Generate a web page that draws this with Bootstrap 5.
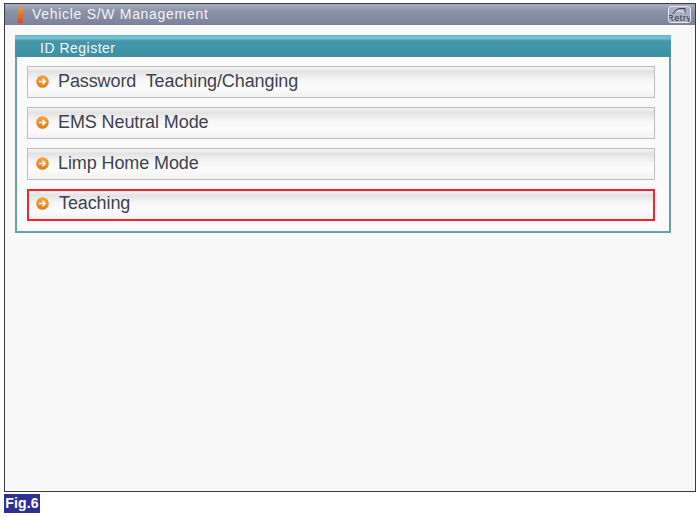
<!DOCTYPE html>
<html lang="en">
<head>
  <meta charset="UTF-8" />
  <meta name="viewport" content="width=device-width, initial-scale=1.0" />
  <title>Vehicle S/W Management</title>
  <link href="https://cdn.jsdelivr.net/npm/bootstrap@5.3.3/dist/css/bootstrap.min.css" rel="stylesheet">
  <style>
    body {
      background-color: #fff;
      font-family: "Liberation Sans", Arial, sans-serif;
      padding: 3px 0 0 4px;
    }

    .scan-frame {
      width: 692px;
      height: 489px;
      background-color: #f8f8f8;
      border: 1px solid #3a3a3e;
    }

    .title-strip {
      height: 21px;
      padding: 0 4px 0 12px;
      background: linear-gradient(#a9afc0, #8b92a8 35%, #7b829b);
      color: #f4f5f8;
      font-size: 14px;
      letter-spacing: .7px;
    }

    .retry-btn {
      width: 23px;
      height: 17px;
      border: 1px solid #e4e6ec;
      border-radius: 3px;
      background-color: #aab0c0;
    }

    .register-panel {
      width: 656px;
      height: 198px;
      margin: 10px 0 0 10px;
      border: 2px solid #6b9ea8;
      border-top: 0;
      background-color: #fafafa;
    }

    .panel-head {
      height: 22px;
      margin: 0 -2px;
      padding: 4px 0 0 25px;
      background: linear-gradient(#5fb4c8, #7cc4d2 3px, #4497a9 6px, #3f8fa2);
      color: #f3f9fa;
      font-size: 14px;
      letter-spacing: .5px;
    }

    .menu-stack {
      padding: 9px 14px 0 10px;
      gap: 9px;
    }

    .menu-row {
      height: 32px;
      padding: 0 0 1px 8px;
      border: 1px solid #bdbdbd;
      background: linear-gradient(#f6f6f6, #e2e2e2 15%, #f7f7f7 45%, #fbfbfb 70%, #f2f2f2);
      color: #3f414e;
      font-size: 18px;
      letter-spacing: -.1px;
    }

    .menu-row.picked {
      border: 2px solid #f3242c;
      padding: 0 0 3px 7px;
    }

    .menu-row svg {
      margin-right: 9px;
    }

    .menu-row.picked svg {
      margin-right: 10px;
    }

    .fig-tag {
      width: 36px;
      height: 19px;
      margin-top: 2px;
      background-color: #2e2f93;
      color: #fff;
      font-size: 14px;
      font-weight: 700;
      letter-spacing: .2px;
    }
  </style>
</head>
<body>
  <div class="scan-frame">
    <div class="title-strip d-flex align-items-center">
      <svg width="7" height="16" viewBox="0 0 7 16" class="me-2 flex-shrink-0">
        <defs>
          <linearGradient id="torch" x1="0" y1="0" x2="0" y2="1">
            <stop offset="0" stop-color="#d9a04a" />
            <stop offset="1" stop-color="#e2452a" />
          </linearGradient>
          <linearGradient id="dot-fill" x1="0" y1="0" x2="0" y2="1">
            <stop offset="0" stop-color="#f3a53a" />
            <stop offset="1" stop-color="#e27a1c" />
          </linearGradient>
        </defs>
        <path d="M0 0h1.500v2h1V0h2v2h1V0H7v9l-1 1v6H1v-6L0 9z" fill="url(#torch)" />
      </svg>
      <span>Vehicle S/W Management</span>
      <div class="retry-btn ms-auto d-flex align-items-end justify-content-center">
        <svg width="21" height="15" viewBox="0 0 21 15">
          <path d="M4 7C5 4 8 1.500 12 1.500h4v5" fill="none" stroke="#3c4050" stroke-width="1" />
          <path d="M8 4h5M13 4l3 2" fill="none" stroke="#f2f3f6" stroke-width="1" />
          <text x="10.500" y="14" text-anchor="middle" font-size="8.500" font-family="Liberation Sans, sans-serif" fill="#2f3340">Retry</text>
        </svg>
      </div>
    </div>

    <div class="register-panel">
      <div class="panel-head d-flex align-items-center">ID Register</div>
      <div class="menu-stack d-flex flex-column">
        <div class="menu-row d-flex align-items-center">
          <svg width="13" height="13" viewBox="0 0 13 13"><use href="#arrow-dot" /></svg>
          <span>Password&nbsp; Teaching/Changing</span>
        </div>
        <div class="menu-row d-flex align-items-center">
          <svg width="13" height="13" viewBox="0 0 13 13"><use href="#arrow-dot" /></svg>
          <span>EMS Neutral Mode</span>
        </div>
        <div class="menu-row d-flex align-items-center">
          <svg width="13" height="13" viewBox="0 0 13 13"><use href="#arrow-dot" /></svg>
          <span>Limp Home Mode</span>
        </div>
        <div class="menu-row picked d-flex align-items-center">
          <svg width="13" height="13" viewBox="0 0 13 13"><use href="#arrow-dot" /></svg>
          <span>Teaching</span>
        </div>
      </div>
    </div>
  </div>

  <div class="fig-tag d-flex align-items-center justify-content-center">Fig.6</div>

  <svg width="0" height="0" class="position-absolute">
    <defs>
      <g id="arrow-dot">
        <circle cx="6.500" cy="6.500" r="6.300" fill="url(#dot-fill)" />
        <path d="M3 6.500h6M6.500 3.800l2.800 2.700-2.800 2.700" fill="none" stroke="#fff" stroke-width="1.600" />
      </g>
    </defs>
  </svg>

  <script src="https://cdn.jsdelivr.net/npm/bootstrap@5.3.3/dist/js/bootstrap.bundle.min.js"></script>
</body>
</html>
